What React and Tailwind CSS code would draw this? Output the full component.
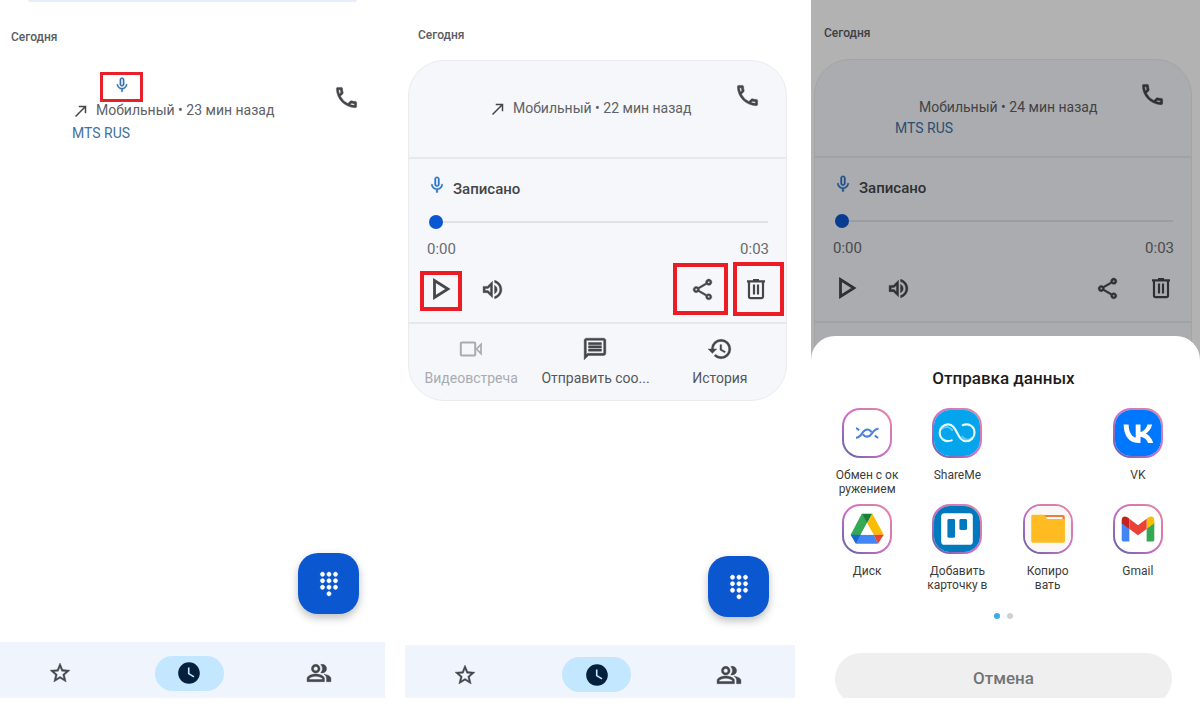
import {
  MdCallMade,
  MdDialpad,
  MdHistory,
  MdMicNone,
  MdOutlineCall,
  MdOutlineMessage,
  MdOutlinePeopleAlt,
  MdOutlineShare,
  MdOutlineVolumeUp,
  MdStarBorder,
  MdWatchLater,
} from "react-icons/md";

// Thickens the glyph while leaving the icon set's empty bounding path out.
const bold = "[stroke-width:0.4] [&>path[fill=none]]:hidden";

function PlayIcon() {
  return (
    <svg viewBox="0 0 24 24" className="size-6" aria-hidden="true">
      <path d="M5.500 3.600v16.800L18.900 12z" fill="none" stroke="currentColor" strokeWidth="2.800" />
    </svg>
  );
}

function TrashIcon() {
  return (
    <svg viewBox="0 0 24 24" className="size-6" fill="none" stroke="currentColor" strokeWidth="2.200" aria-hidden="true">
      <path d="M3 4.400h18M5 4.400V19.600a1.600 1.600 0 0 0 1.600 1.600h10.800a1.600 1.600 0 0 0 1.600-1.600V4.400M9 3h6M10 7.600v10M14 7.600v10" />
    </svg>
  );
}

function VideoIcon() {
  return (
    <svg viewBox="0 0 24 24" className="size-6" fill="none" stroke="currentColor" strokeWidth="2" aria-hidden="true">
      <rect x="1.800" y="5.400" width="14.400" height="13.200" rx="1" />
      <path d="M17.500 12l4.500-4.600v9.200z" strokeWidth="1.700" />
    </svg>
  );
}

function DayLabel({ className }) {
  return <h2 className={`text-xs leading-4 font-medium text-[#5a5c60] ${className}`}>Сегодня</h2>;
}

function CallInfo({ minutes, arrow, carrier }) {
  return (
    <div className="flex flex-col gap-[5px] text-sm leading-4">
      <p className="flex text-[#5f6165]">
        <span className="flex w-6 items-center">{arrow && <MdCallMade size={18} className="text-[#44464a]" />}</span>
        Мобильный • {minutes} мин назад
      </p>
      {carrier && <p className="text-[#41719f]">MTS RUS</p>}
    </div>
  );
}

function CallButton({ className }) {
  return (
    <button type="button" aria-label="Позвонить" className={`text-[#44464a] ${className}`}>
      <MdOutlineCall size={27} className={bold} />
    </button>
  );
}

function CardActions() {
  return (
    <footer className="grid grid-cols-3 pt-[13px] pr-1 pb-3 text-sm leading-5 text-[#55575b]">
      <button type="button" disabled className="flex flex-col items-center gap-[7px] text-[#a9abaf]">
        <VideoIcon />
        Видеовстреча
      </button>
      <button type="button" className="flex flex-col items-center gap-[7px] whitespace-nowrap">
        <MdOutlineMessage size={26} className={`-my-px text-[#44464a] ${bold}`} />
        Отправить соо...
      </button>
      <button type="button" className="flex flex-col items-center gap-[7px]">
        <MdHistory size={26} className={`-my-px text-[#44464a] ${bold}`} />
        История
      </button>
    </footer>
  );
}

function RecordingCard({ minutes, arrow, carrier, marked, children }) {
  const frame = marked ? "border-[#ec1c24]" : "border-transparent";
  return (
    <article className="mr-2 ml-[3px] rounded-[36px] border border-[#e9ebef] bg-[#f5f7fb] text-[#44464a]">
      <header className="flex h-24 items-start justify-between pt-5 pr-[25px] pl-20">
        <div className="pt-[19px]">
          <CallInfo minutes={minutes} arrow={arrow} carrier={carrier} />
        </div>
        <CallButton className="mt-px" />
      </header>
      <section className="border-y-2 border-[#e5e8ee] pt-4 pb-1.5">
        <div className="flex items-start gap-1.5 pl-[18px]">
          <MdMicNone size={20} className={`text-[#2f74c8] ${bold}`} />
          <h3 className="mt-1 text-[15px] leading-5 font-medium">Записано</h3>
        </div>
        <input
          type="range"
          min="0"
          max="3"
          defaultValue="0"
          aria-label="Позиция записи"
          className="mt-4 mr-[18px] ml-5 block h-3.5 w-[calc(100%-38px)] appearance-none bg-transparent [&::-webkit-slider-runnable-track]:h-0.5 [&::-webkit-slider-runnable-track]:bg-[#dfe1e8] [&::-webkit-slider-thumb]:-mt-1.5 [&::-webkit-slider-thumb]:size-3.5 [&::-webkit-slider-thumb]:appearance-none [&::-webkit-slider-thumb]:rounded-full [&::-webkit-slider-thumb]:bg-[#0b57d0]"
        />
        <div className="mt-2.5 flex justify-between pr-[17px] pl-[18px] text-[15px] leading-5 text-[#6a6c70]">
          <span>0:00</span>
          <span>0:03</span>
        </div>
        <div className="mt-[3px] flex items-center pr-0.5 pl-[11px]">
          <button type="button" aria-label="Воспроизвести" className={`mt-1 flex h-10 w-[42px] items-center justify-center border-4 pb-1 ${frame}`}>
            <PlayIcon />
          </button>
          <button type="button" aria-label="Громкая связь" className="ml-[18px]">
            <MdOutlineVolumeUp size={25} className={bold} />
          </button>
          <button type="button" aria-label="Поделиться" className={`ml-auto flex h-[52px] w-[55px] items-center justify-center border-4 pl-1 ${frame}`}>
            <MdOutlineShare size={25} className={bold} />
          </button>
          <button type="button" aria-label="Удалить" className={`ml-[5px] flex h-[54px] w-[51px] items-center justify-center border-4 pr-1.5 ${frame}`}>
            <TrashIcon />
          </button>
        </div>
      </section>
      {children}
    </article>
  );
}

function Dialpad() {
  return (
    <button
      type="button"
      aria-label="Набор номера"
      className="mt-auto mr-[26px] mb-7 flex size-[61px] items-center justify-center self-end rounded-[20px] bg-[#0b57d0] text-white shadow-[0_4px_8px_rgba(0,0,0,0.25)]"
    >
      <MdDialpad size={26} className={bold} />
    </button>
  );
}

function BottomNav({ className }) {
  return (
    <nav className={`flex items-center justify-between bg-[#f0f4fd] pt-1.5 pr-[53px] pl-12 text-[#44464a] ${className}`}>
      <button type="button" aria-label="Избранное">
        <MdStarBorder size={24} className={bold} />
      </button>
      <button type="button" aria-label="Недавние" className="flex h-[35px] w-[69px] items-center justify-center rounded-full bg-[#c2e7ff] text-[#04203d]">
        <MdWatchLater size={26} />
      </button>
      <button type="button" aria-label="Контакты">
        <MdOutlinePeopleAlt size={26} className={bold} />
      </button>
    </nav>
  );
}

function NearbyLogo() {
  return (
    <svg viewBox="0 0 48 48" className="size-full" fill="none" stroke="#4a80dc" strokeWidth="2.200" aria-hidden="true">
      <path d="M12.500 29c3.500 0 5-2.500 7-5.500 2.700-4.200 6.800-4.200 9.300-.4" />
      <path d="M36 19.500c-3.500 0-5.200 2.500-7.200 5.300-2.600 3.800-6.600 3.900-9.100.6" />
      <path d="M12.500 19c1.200.2 2.200.9 3.200 2.200M32.300 26.500c1.200 1.500 2.300 2.300 3.500 2.500" />
    </svg>
  );
}

function ShareMeLogo() {
  return (
    <svg viewBox="0 0 48 48" className="size-full" fill="none" strokeLinecap="round" aria-hidden="true">
      <rect width="48" height="48" fill="#05a5ee" />
      <path d="M8.500 19.500c3.500-3 8-2 10.500 1.500M29.500 28c3 3.800 7.500 3.800 10.500 .5" stroke="#5fcbf6" strokeWidth="2" />
      <path d="M18.500 31.700c-6.700 2.400-12.500-1.500-12.500-7.900 0-5 3.800-8.800 8.700-8.800 9.800 0 9 17.600 18.900 17.600 4.900 0 8.700-4 8.700-8.900 0-6.500-6-10.300-12.400-7.900" stroke="#e9fbff" strokeWidth="2.200" />
    </svg>
  );
}

function VkLogo() {
  return (
    <svg viewBox="0 0 48 48" className="size-full" aria-hidden="true">
      <rect width="48" height="48" fill="#0077ff" />
      <path
        fill="#fff"
        d="M25.500 34.500C15 34.500 9.300 27.400 9 15h5.200c.2 9.100 4.200 13 7.400 13.800V15h5v7.800c3-.3 6.200-3.900 7.300-7.800h4.800c-.8 4.600-4.200 8.200-6.600 9.600 2.400 1.200 6.200 4.200 7.700 9.900h-5.300c-1.200-3.600-4-6.300-7.900-6.700v6.700z"
      />
    </svg>
  );
}

function DriveLogo() {
  return (
    <svg viewBox="0 0 48 48" className="size-full" aria-hidden="true">
      <path fill="#34a853" d="M18.500 8L24 17.500 12.500 39.500 7 30z" />
      <path fill="#188038" d="M18.500 8H29.500L24 18z" />
      <path fill="#fbbc04" d="M29.500 8L41.500 30H31L24 18z" />
      <path fill="#4285f4" d="M17.500 30H31L35.500 39.500H12.500z" />
      <path fill="#1967d2" d="M7 30h10.500l-5 9.500z" />
      <path fill="#ea4335" d="M31 30h10.500l-6 9.500z" />
      <path fill="#fff" d="M24 18l6.900 12H17.300z" />
    </svg>
  );
}

function TrelloLogo() {
  return (
    <svg viewBox="0 0 48 48" className="size-full" aria-hidden="true">
      <rect width="48" height="48" fill="#0079bf" />
      <rect x="7.500" y="7.500" width="33" height="33" rx="3.500" fill="#fff" />
      <rect x="14" y="13.500" width="8" height="19.500" rx="1.500" fill="#0079bf" />
      <rect x="26.500" y="13.500" width="8" height="11.500" rx="1.500" fill="#0079bf" />
    </svg>
  );
}

function FolderLogo() {
  return (
    <svg viewBox="0 0 48 48" className="size-full" aria-hidden="true">
      <rect width="48" height="48" fill="#faf8f5" />
      <path fill="#f07b3c" d="M20 9.500h19.500a2 2 0 0 1 2 2v8H20z" />
      <path fill="#fff" d="M21.500 11.500h17.500v4H21z" />
      <path fill="#ffbc22" d="M8.500 9h11.700l2.300 3.800a1.500 1.500 0 0 0 1.300.7H40a1.700 1.700 0 0 1 1.700 1.700v21.200a2 2 0 0 1-2 2H8.500a2 2 0 0 1-2-2V11a2 2 0 0 1 2-2z" />
    </svg>
  );
}

function GmailLogo() {
  return (
    <svg viewBox="0 0 48 48" className="size-full" aria-hidden="true">
      <path fill="#4285f4" d="M7 17l8 6v14H8.500A1.500 1.500 0 0 1 7 35.500z" />
      <path fill="#34a853" d="M41 17l-8 6v14h6.500a1.500 1.500 0 0 0 1.500-1.500z" />
      <path fill="#c5221f" d="M7 18v-3.500c0-3.500 3.500-4.500 6-2.700l2 1.500V24z" />
      <path fill="#fbbc04" d="M41 18v-3.500c0-3.500-3.500-4.500-6-2.700l-2 1.500V24z" />
      <path fill="#ea4335" d="M15 13.300l9 6.700 9-6.700V24l-9 6.500L15 24z" />
    </svg>
  );
}

const targets = [
  { logo: NearbyLogo, lines: ["Обмен с ок", "ружением"], place: "col-start-1" },
  { logo: ShareMeLogo, lines: ["ShareMe"], place: "col-start-2" },
  { logo: VkLogo, lines: ["VK"], place: "col-start-4" },
  { logo: DriveLogo, lines: ["Диск"], place: "col-start-1" },
  { logo: TrelloLogo, lines: ["Добавить", "карточку в"], place: "col-start-2" },
  { logo: FolderLogo, lines: ["Копиро", "вать"], place: "col-start-3" },
  { logo: GmailLogo, lines: ["Gmail"], place: "col-start-4" },
];

function ShareSheet() {
  return (
    <section
      role="dialog"
      aria-label="Отправка данных"
      className="absolute inset-x-0 top-[336px] bottom-0 flex flex-col overflow-hidden rounded-t-[24px] bg-white pt-8"
    >
      <h2 className="pr-1 text-center text-[17px] leading-5 font-medium text-[#1c1c1c]">Отправка данных</h2>
      <div className="mt-5 grid grid-cols-4 gap-y-2 pr-[17px] pl-[11px]">
        {targets.map(({ logo: Logo, lines, place }) => (
          <button key={lines[0]} type="button" className={`flex flex-col items-center justify-start ${place}`}>
            <span className="size-[50px] rounded-[18px] bg-linear-to-tr from-[#5a5fa8] via-[#cf70c4] to-[#e58698] p-0.5">
              <span className="block size-full overflow-hidden rounded-[16px] bg-white">
                <Logo />
              </span>
            </span>
            <span className="mt-2.5 flex flex-col text-xs leading-[14px] text-[#3c3c3c]">
              {lines.map((line) => (
                <span key={line}>{line}</span>
              ))}
            </span>
          </button>
        ))}
      </div>
      <div className="mt-[21px] flex justify-center gap-[7px] pr-1">
        <span className="size-1.5 rounded-full bg-[#3daae9]" />
        <span className="size-1.5 rounded-full bg-[#cfcfcf]" />
      </div>
      <button type="button" className="mr-7 ml-6 mt-[34px] h-[52px] shrink-0 rounded-full bg-[#efefef] text-[17px] font-medium text-[#747474]">
        Отмена
      </button>
    </section>
  );
}

export default function App() {
  return (
    <main className="grid min-h-screen grid-cols-[385fr_20fr_390fr_16fr_389fr] bg-white pb-2 font-['Roboto','Noto_Sans',sans-serif]">
      <section className="flex flex-col">
        <div className="mx-7 h-0.5 rounded-b-full bg-[#e6edfb]" />
        <DayLabel className="mt-[27px] ml-[11px]" />
        <div className="mt-[27px] flex items-start justify-between pr-[25px] pl-[72px]">
          <div>
            <button type="button" aria-label="Запись разговора" className="ml-7 flex h-[30px] w-[43px] items-center justify-center border-[3px] border-[#e8202a] pb-1 text-[#3674ae]">
              <MdMicNone size={18} className={bold} />
            </button>
            <CallInfo minutes={23} arrow carrier />
          </div>
          <CallButton className="mt-3" />
        </div>
        <Dialpad />
        <BottomNav className="h-14" />
      </section>

      <section className="col-start-3 flex flex-col">
        <DayLabel className="mt-[27px] mb-[17px] ml-[13px]" />
        <RecordingCard minutes={22} arrow marked>
          <CardActions />
        </RecordingCard>
        <Dialpad />
        <BottomNav className="h-[53px]" />
      </section>

      <section className="relative col-start-5 flex flex-col overflow-hidden">
        <DayLabel className="mt-[25px] mb-[18px] ml-[13px]" />
        <RecordingCard minutes={24} carrier>
          <div className="h-20" />
        </RecordingCard>
        <div className="absolute inset-0 bg-black/30" />
        <ShareSheet />
      </section>
    </main>
  );
}
